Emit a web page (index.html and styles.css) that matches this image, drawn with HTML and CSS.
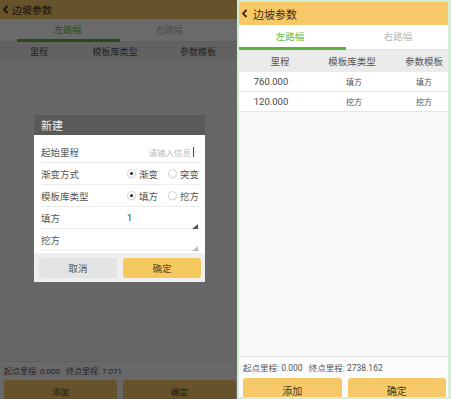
FILE: index.html
```html
<!DOCTYPE html>
<html lang="zh">
<head>
<meta charset="utf-8">
<title>边坡参数</title>
<link rel="stylesheet" href="styles.css">
</head>
<body>
<div class="screen">
  <div class="phone left">
    <div class="hdr">
      <svg class="chev" width="7" height="9" viewBox="0 0 7 9"><path d="M5.5 1 L2 4.5 L5.5 8" fill="none" stroke="#3b2d14" stroke-width="1.8"/></svg>
      <span>边坡参数</span>
    </div>
    <div class="tabs">
      <div class="tab on">左路幅</div>
      <div class="tab">右路幅</div>
    </div>
    <div class="inkrow"><div class="ink"></div></div>
    <div class="thead">
      <div class="c1">里程</div><div class="c2">模板库类型</div><div class="c3">参数模板</div>
    </div>
    <div class="spacer"></div>
    <div class="foot">
      <div class="ftext">起点里程: 0.000&nbsp;&nbsp;&nbsp;终点里程: 7.071</div>
      <div class="btnrow"><div class="btn">添加</div><div class="btn">确定</div></div>
    </div>

    <div class="overlay"></div>
    <div class="dialog">
      <div class="dtitle">新建</div>
      <div class="dbody">
        <div class="drow">
          <div class="lab">起始里程</div>
          <div class="ph">请输入信息<span class="cursor"></span></div>
        </div>
        <div class="drow">
          <div class="lab">渐变方式</div>
          <div class="radios">
            <div class="opt"><span class="radio checked"></span>渐变</div>
            <div class="opt"><span class="radio"></span>突变</div>
          </div>
        </div>
        <div class="drow">
          <div class="lab">模板库类型</div>
          <div class="radios">
            <div class="opt"><span class="radio checked"></span>填方</div>
            <div class="opt"><span class="radio"></span>挖方</div>
          </div>
        </div>
        <div class="drow">
          <div class="lab">填方</div>
          <div class="ta">
            <div class="tatext">1</div>
            <svg class="grip" width="6" height="5" viewBox="0 0 6 5"><path d="M6 0 L6 5 L0 5 Z" fill="#555"/></svg>
          </div>
        </div>
        <div class="drow">
          <div class="lab">挖方</div>
          <div class="ta">
            <div class="tatext"></div>
            <svg class="grip" width="6" height="5" viewBox="0 0 6 5"><path d="M6 0 L6 5 L0 5 Z" fill="#bbb"/></svg>
          </div>
        </div>
      </div>
      <div class="dbtns">
        <div class="dbtn cancel">取消</div>
        <div class="dbtn ok">确定</div>
      </div>
    </div>
  </div>

  <div class="phone right">
    <div class="hdr">
      <svg class="chev" width="7" height="9" viewBox="0 0 7 9"><path d="M5.5 1 L2 4.5 L5.5 8" fill="none" stroke="#3b2d14" stroke-width="1.8"/></svg>
      <span>边坡参数</span>
    </div>
    <div class="tabs">
      <div class="tab on">左路幅</div>
      <div class="tab">右路幅</div>
    </div>
    <div class="inkrow"><div class="ink"></div></div>
    <div class="thead">
      <div class="c1">里程</div><div class="c2">模板库类型</div><div class="c3">参数模板</div>
    </div>
    <div class="trow">
      <div class="c1 num">760.000</div><div class="c2">填方</div><div class="c3">填方</div>
    </div>
    <div class="trow">
      <div class="c1 num">120.000</div><div class="c2">挖方</div><div class="c3">挖方</div>
    </div>
    <div class="spacer"></div>
    <div class="foot">
      <div class="ftext">起点里程: 0.000&nbsp;&nbsp;&nbsp;终点里程: 2738.162</div>
      <div class="btnrow"><div class="btn">添加</div><div class="btn">确定</div></div>
    </div>
  </div>
</div>
</body>
</html>
```
FILE: styles.css
```css
html, body {
  margin: 0;
  padding: 0;
}
body {
  width: 451px;
  height: 399px;
  overflow: hidden;
  background: #d4eed5;
  font-family: Roboto, "Noto Sans CJK SC", sans-serif;
}
.screen {
  display: flex;
  align-items: flex-start;
  width: 451px;
  height: 399px;
}
.phone {
  display: flex;
  flex-direction: column;
  background: #f8f8f8;
  overflow: hidden;
  flex-shrink: 0;
}
.phone > * { flex-shrink: 0; }
.phone > .spacer { flex: 1 1 0; min-height: 0; }

.left {
  position: relative;
  width: 237px;
  height: 399px;
}
.right {
  width: 209px;
  height: 395px;
  margin: 2px 0 0 2px;
}

/* header */
.hdr {
  display: flex;
  align-items: center;
  background: #f6c867;
  color: #3b2d14;
}
.left .hdr { height: 19px; padding-left: 2px; gap: 3px; font-size: 10px; }
.right .hdr { height: 23px; padding-left: 2px; gap: 5px; font-size: 11px; }

/* tabs */
.tabs {
  display: flex;
  background: #fff;
}
.tab {
  flex: 1;
  display: flex;
  align-items: center;
  justify-content: center;
  color: #b8b8b8;
}
.tab.on { color: #6cbd45; }
.left .tabs { height: 20px; padding: 0 17px; font-size: 9px; }
.right .tabs { height: 22px; font-size: 9.5px; padding-left: 1px; padding-right: 0; }
.right .tabs .tab + .tab { padding-left: 8px; }

.inkrow {
  background: #fff;
  height: 3px;
  border-bottom: 1px solid #e2e2e2;
  box-sizing: border-box;
}
.ink { height: 3px; background: #5fb23a; }
.left .ink { margin-left: 17px; width: 103px; }
.right .ink { width: 107px; }

/* table */
.thead, .trow {
  display: grid;
  align-items: center;
  text-align: center;
}
.thead { background: #ebebeb; color: #555; }
.left .thead { height: 18px; grid-template-columns: 78px 74px 85px; font-size: 9px; }
.left .thead .c3 { padding-left: 7px; }
.right .thead { height: 22px; grid-template-columns: 82px 62px 65px; font-size: 9.5px; }
.right .c3 { padding-left: 17px; }
.trow {
  height: 20px;
  box-sizing: border-box;
  grid-template-columns: 82px 62px 65px;
  background: #fff;
  border-bottom: 1px solid #e6e6e6;
  color: #555;
  font-size: 8px;
}
.trow .c1 { padding-right: 18px; }
.trow .c2 { padding-left: 4px; }
.num { font-size: 9.5px; color: #444; }

/* footer */
.foot {
  background: #fbfbfb;
  border-top: 1px solid #e3e3e3;
}
.ftext {
  display: flex;
  align-items: center;
  color: #555;
  white-space: nowrap;
}
.left .ftext { height: 17px; padding-left: 4px; font-size: 8px; margin-bottom: 1px; }
.right .ftext { height: 19px; padding-left: 4px; font-size: 8.5px; }
.btnrow {
  display: flex;
  align-items: flex-start;
  gap: 6px;
}
.btn {
  flex: 1;
  display: flex;
  align-items: center;
  justify-content: center;
  background: #f6c867;
  border-radius: 3px;
  color: #4a3a1a;
}
.left .btnrow { height: 19px; padding: 0 1px 0 4px; }
.left .btn { height: 21px; font-size: 8.5px; }
.right .btnrow { height: 21px; padding: 2px 2px 0 4px; box-sizing: border-box; }
.right .btn { height: 24px; font-size: 10px; }

/* overlay + dialog */
.overlay {
  position: absolute;
  inset: 0;
  background: rgba(0, 0, 0, 0.585);
}
.dialog {
  position: absolute;
  left: 34px;
  top: 115px;
  width: 171px;
  display: flex;
  flex-direction: column;
}
.dtitle {
  height: 20px;
  display: flex;
  align-items: center;
  padding-left: 7px;
  background: #5a5a5a;
  color: #eeeeee;
  font-size: 11px;
}
.dbody {
  background: #fff;
  padding: 6px 5px 2px 7px;
}
.drow {
  height: 22px;
  box-sizing: border-box;
  display: flex;
  align-items: center;
  border-bottom: 1px solid #ededed;
  font-size: 9.5px;
  color: #555;
}
.lab { width: 86px; flex-shrink: 0; }
.ph {
  flex: 1;
  display: flex;
  align-items: center;
  justify-content: flex-end;
  color: #bdbdbd;
  font-size: 8.5px;
  padding-right: 6px;
}
.cursor {
  display: inline-block;
  width: 1px;
  height: 10px;
  background: #444;
  margin-left: 2px;
}
.radios {
  flex: 1;
  display: flex;
  justify-content: flex-end;
  gap: 10px;
  padding-right: 1px;
}
.opt {
  display: flex;
  align-items: center;
  gap: 3px;
}
.radio {
  width: 9px;
  height: 9px;
  box-sizing: border-box;
  border-radius: 50%;
  border: 1px solid #d6d6d6;
  background: #fff;
  box-shadow: 0 0.5px 1px rgba(0,0,0,0.12);
  display: flex;
  align-items: center;
  justify-content: center;
}
.radio.checked::after {
  content: "";
  width: 3.5px;
  height: 3.5px;
  border-radius: 50%;
  background: #222;
}
.ta {
  flex: 1;
  height: 22px;
  box-sizing: border-box;
  padding: 5px 2px 0 0;
  display: flex;
  flex-direction: column;
  color: #333;
}
.tatext { height: 12px; line-height: 12px; font-size: 9px; }
.grip { align-self: flex-end; }
.dbtns {
  display: flex;
  gap: 6px;
  padding: 5px 4px 4px 5px;
  background: #efefef;
}
.dbtn {
  flex: 1;
  height: 20px;
  border-radius: 3px;
  display: flex;
  align-items: center;
  justify-content: center;
  font-size: 9.5px;
}
.cancel { background: #e3e3e3; color: #555; }
.ok { background: #f6c95f; color: #5a4520; }
```
